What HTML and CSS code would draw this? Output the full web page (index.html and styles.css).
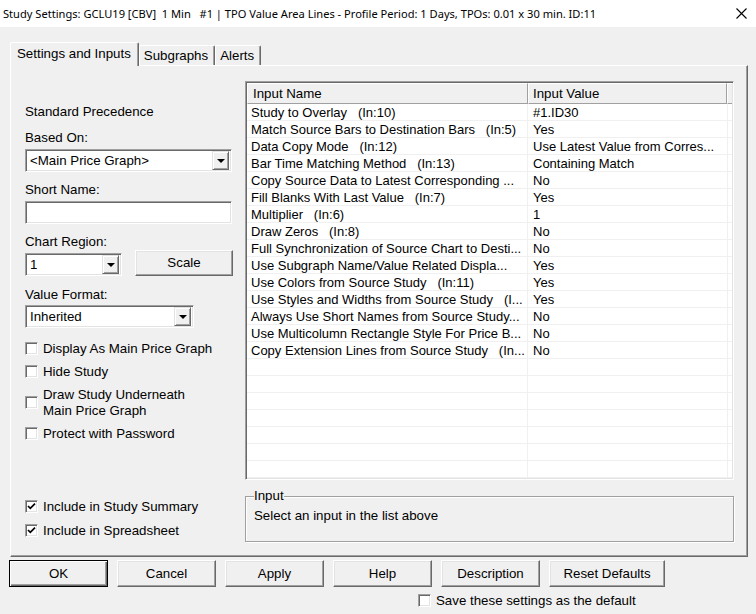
FILE: index.html
```html
<!DOCTYPE html>
<html>
<head>
<meta charset="utf-8">
<title>Study Settings</title>
<link rel="stylesheet" href="styles.css">
</head>
<body>
<div class="titlebar">
  <span class="title">Study Settings: GCLU19 [CBV]  1 Min   #1 | TPO Value Area Lines - Profile Period: 1 Days, TPOs: 0.01 x 30 min. ID:11</span>
  <svg class="close" width="11" height="11" viewBox="0 0 11 11"><path d="M0.5 0.5 L10.5 10.5 M10.5 0.5 L0.5 10.5" stroke="#000" stroke-width="1.1" fill="none"/></svg>
</div>
<div class="client">
  <div class="tabs">
    <div class="tab active">Settings and Inputs</div>
    <div class="tab">Subgraphs</div>
    <div class="tab">Alerts</div>
  </div>
  <div class="panel">
    <div class="left">
      <div class="lbl">Standard Precedence</div>
      <div class="lbl g10">Based On:</div>
      <div class="select w206 g4"><span class="val">&lt;Main Price Graph&gt;</span><span class="dd"><i></i></span></div>
      <div class="lbl g9">Short Name:</div>
      <div class="edit g4"></div>
      <div class="lbl g9">Chart Region:</div>
      <div class="regrow">
        <div class="select w96"><span class="val">1</span><span class="dd"><i></i></span></div>
        <div class="btn scale">Scale</div>
      </div>
      <div class="lbl g10">Value Format:</div>
      <div class="select w168 g3"><span class="val">Inherited</span><span class="dd"><i></i></span></div>
      <div class="chk g12"><span class="box"></span><span>Display As Main Price Graph</span></div>
      <div class="chk g7"><span class="box"></span><span>Hide Study</span></div>
      <div class="chk g7"><span class="box"></span><span>Draw Study Underneath<br>Main Price Graph</span></div>
      <div class="chk g7"><span class="box"></span><span>Protect with Password</span></div>
      <div class="chk g57"><span class="box"><svg width="9" height="9" viewBox="0 0 9 9"><path d="M1 4 L3.3 6.4 L8 1.6" stroke="#000" stroke-width="1.7" fill="none"/></svg></span><span>Include in Study Summary</span></div>
      <div class="chk g8"><span class="box"><svg width="9" height="9" viewBox="0 0 9 9"><path d="M1 4 L3.3 6.4 L8 1.6" stroke="#000" stroke-width="1.7" fill="none"/></svg></span><span>Include in Spreadsheet</span></div>
    </div>
    <div class="right">
      <div class="list">
        <div class="lhead">
          <div class="hc c1">Input Name</div>
          <div class="hc c2">Input Value</div>
          <div class="hc c3"></div>
        </div>
        <div class="lbody">
          <div class="row"><span class="c1">Study to Overlay   (In:10)</span><span class="c2">#1.ID30</span></div>
          <div class="row"><span class="c1">Match Source Bars to Destination Bars   (In:5)</span><span class="c2">Yes</span></div>
          <div class="row"><span class="c1">Data Copy Mode   (In:12)</span><span class="c2">Use Latest Value from Corres...</span></div>
          <div class="row"><span class="c1">Bar Time Matching Method   (In:13)</span><span class="c2">Containing Match</span></div>
          <div class="row"><span class="c1">Copy Source Data to Latest Corresponding ...</span><span class="c2">No</span></div>
          <div class="row"><span class="c1">Fill Blanks With Last Value   (In:7)</span><span class="c2">Yes</span></div>
          <div class="row"><span class="c1">Multiplier   (In:6)</span><span class="c2">1</span></div>
          <div class="row"><span class="c1">Draw Zeros   (In:8)</span><span class="c2">No</span></div>
          <div class="row"><span class="c1">Full Synchronization of Source Chart to Desti...</span><span class="c2">No</span></div>
          <div class="row"><span class="c1">Use Subgraph Name/Value Related Displa...</span><span class="c2">Yes</span></div>
          <div class="row"><span class="c1">Use Colors from Source Study   (In:11)</span><span class="c2">Yes</span></div>
          <div class="row"><span class="c1">Use Styles and Widths from Source Study   (I...</span><span class="c2">Yes</span></div>
          <div class="row"><span class="c1">Always Use Short Names from Source Study...</span><span class="c2">No</span></div>
          <div class="row"><span class="c1">Use Multicolumn Rectangle Style For Price B...</span><span class="c2">No</span></div>
          <div class="row"><span class="c1">Copy Extension Lines from Source Study   (In...</span><span class="c2">No</span></div>
        </div>
      </div>
      <fieldset class="group">
        <legend>Input</legend>
        <div class="gtext">Select an input in the list above</div>
      </fieldset>
    </div>
  </div>
  <div class="buttons">
    <div class="btn default">OK</div>
    <div class="btn">Cancel</div>
    <div class="btn">Apply</div>
    <div class="btn">Help</div>
    <div class="btn">Description</div>
    <div class="btn wide">Reset Defaults</div>
  </div>
  <div class="savedef chk"><span class="box"></span><span>Save these settings as the default</span></div>
</div>
</body>
</html>
```

FILE: styles.css
```css
* { box-sizing: border-box; }
html, body { margin: 0; padding: 0; }
body {
  width: 756px;
  height: 614px;
  overflow: hidden;
  background: #f0f0f0;
  font-family: "Liberation Sans", Arial, sans-serif;
  font-size: 13.3px;
  line-height: 16px;
  color: #000;
}
.titlebar {
  height: 27px;
  background: #fff;
  display: flex;
  align-items: center;
  justify-content: space-between;
  padding: 0 9px 0 3px;
}
.title {
  font-family: "Noto Sans", "Open Sans", sans-serif;
  font-size: 11.1px;
  white-space: pre;
}
.close { display: block; }
.client { padding-top: 15px; }

/* tabs */
.tabs {
  display: flex;
  align-items: flex-end;
  height: 23px;
  margin-left: 10px;
}
.tab {
  height: 20px;
  padding: 2px 6px 0 4px;
  border-top: 1px solid #fff;
  border-left: 1px solid #fff;
  border-right: 1px solid #696969;
  box-shadow: inset -1px 0 #a0a0a0;
  border-radius: 2px 2px 0 0;
  background: #f0f0f0;
}
.tab.active {
  height: 24px;
  margin-bottom: -1px;
  padding: 3px 7px 0 6px;
  position: relative;
  z-index: 1;
}

/* panel */
.panel {
  width: 738px;
  height: 492px;
  margin-left: 10px;
  border: 1px solid;
  border-color: #fff #696969 #696969 #fff;
  box-shadow: inset -1px -1px #a0a0a0;
  padding: 15px 12px 0 14px;
  display: flex;
  gap: 13px;
}
.left {
  width: 207px;
  display: flex;
  flex-direction: column;
  align-items: flex-start;
  padding-top: 22px;
}
.lbl { height: 16px; padding-top: 1px; white-space: nowrap; }
.g3 { margin-top: 3px; }
.g4 { margin-top: 4px; }
.g7 { margin-top: 7px; }
.g8 { margin-top: 8px; }
.g9 { margin-top: 9px; }
.g10 { margin-top: 10px; }
.g12 { margin-top: 12px; }
.g57 { margin-top: 57px; }

.select, .edit {
  height: 23px;
  background: #fff;
  border: 1px solid;
  border-color: #a0a0a0 #fff #fff #a0a0a0;
  box-shadow: inset 1px 1px #696969, inset -1px -1px #e3e3e3;
  display: flex;
  align-items: center;
  padding: 2px;
}
.select .val { flex: 1; padding-left: 2px; padding-top: 1px; white-space: nowrap; }
.w206 { width: 207px; }
.w96 { width: 97px; }
.w168 { width: 169px; }
.edit { width: 207px; }
.dd {
  width: 17px;
  height: 19px;
  background: #f0f0f0;
  border: 1px solid;
  border-color: #e3e3e3 #696969 #696969 #e3e3e3;
  box-shadow: inset 1px 1px #fff, inset -1px -1px #a0a0a0;
  display: flex;
  align-items: center;
  justify-content: center;
}
.dd i {
  display: block;
  width: 0;
  height: 0;
  border-left: 4px solid transparent;
  border-right: 4px solid transparent;
  border-top: 4px solid #000;
  margin-top: 1px;
}
.regrow {
  margin-top: 1px;
  height: 26px;
  width: 208px;
  display: flex;
  align-items: flex-end;
  justify-content: space-between;
}

.btn {
  width: 99px;
  height: 27px;
  background: #f0f0f0;
  border: 1px solid;
  border-color: #fff #696969 #696969 #fff;
  box-shadow: inset -1px -1px #a0a0a0, inset 1px 1px #e3e3e3;
  display: flex;
  align-items: center;
  justify-content: center;
  white-space: nowrap;
}
.btn.scale { width: 98px; height: 26px; }
.btn.wide { width: 116px; }
.btn.default {
  border: 1px solid #000;
  box-shadow: inset 1px 1px #fff, inset -1px -1px #696969, inset -2px -2px #a0a0a0;
}

.chk {
  display: flex;
  align-items: center;
  gap: 5px;
  white-space: nowrap;
}
.chk > span:last-child { padding-top: 1px; margin-bottom: -1px; }
.box {
  width: 13px;
  height: 13px;
  flex: none;
  background: #fff;
  border: 1px solid;
  border-color: #a0a0a0 #fff #fff #a0a0a0;
  box-shadow: inset 1px 1px #696969, inset -1px -1px #e3e3e3;
  display: flex;
  align-items: center;
  justify-content: center;
}
.box svg { display: block; }

/* right side */
.right {
  width: 489px;
  display: flex;
  flex-direction: column;
}
.list {
  height: 399px;
  background: #fff;
  border: 1px solid;
  border-color: #a0a0a0 #fff #fff #a0a0a0;
  box-shadow: inset 1px 1px #696969, inset -1px -1px #e3e3e3;
  padding: 1px;
  display: flex;
  flex-direction: column;
}
.lhead {
  display: flex;
  height: 21px;
  flex: none;
}
.hc {
  height: 21px;
  background: #f0f0f0;
  border-top: 1px solid #fff;
  border-left: 1px solid #fff;
  border-right: 1px solid #a0a0a0;
  border-bottom: 1px solid #a0a0a0;
  padding: 2px 0 0 5px;
  white-space: nowrap;
}
.hc.c1 { width: 281px; }
.hc.c2 { width: 199px; padding-left: 4px; }
.hc.c3 { flex: 1; border-right: none; padding: 0; }
.lbody {
  flex: 1;
  background-image:
    linear-gradient(#f0f0f0, #f0f0f0),
    linear-gradient(#f0f0f0, #f0f0f0),
    repeating-linear-gradient(to bottom, transparent 0 16px, #f0f0f0 16px 17px);
  background-size: 1px 100%, 1px 100%, 100% 100%;
  background-position: 280px 0, 480px 0, 0 0;
  background-repeat: no-repeat;
}
.row {
  display: flex;
  height: 17px;
  line-height: 16px;
  font-size: 13px;
}
.row span { white-space: pre; overflow: hidden; padding-top: 1px; }
.row .c1 { width: 281px; padding-left: 4px; }
.row .c2 { width: 199px; padding-left: 5px; }

.group {
  margin: 8px 0 0 0;
  height: 54px;
  border: 1px solid #a0a0a0;
  box-shadow: 1px 1px 0 #fff, inset 1px 1px 0 #fff;
  padding: 0 8px 0 8px;
}
.group legend {
  padding: 0;
  background: #f0f0f0;
  line-height: 16px;
}
.gtext { margin-top: 4px; white-space: nowrap; }

.buttons {
  display: flex;
  gap: 9px;
  padding: 3px 0 0 9px;
}
.savedef {
  margin: 5px 0 0 418px;
  gap: 5px;
  height: 16px;
}
```
